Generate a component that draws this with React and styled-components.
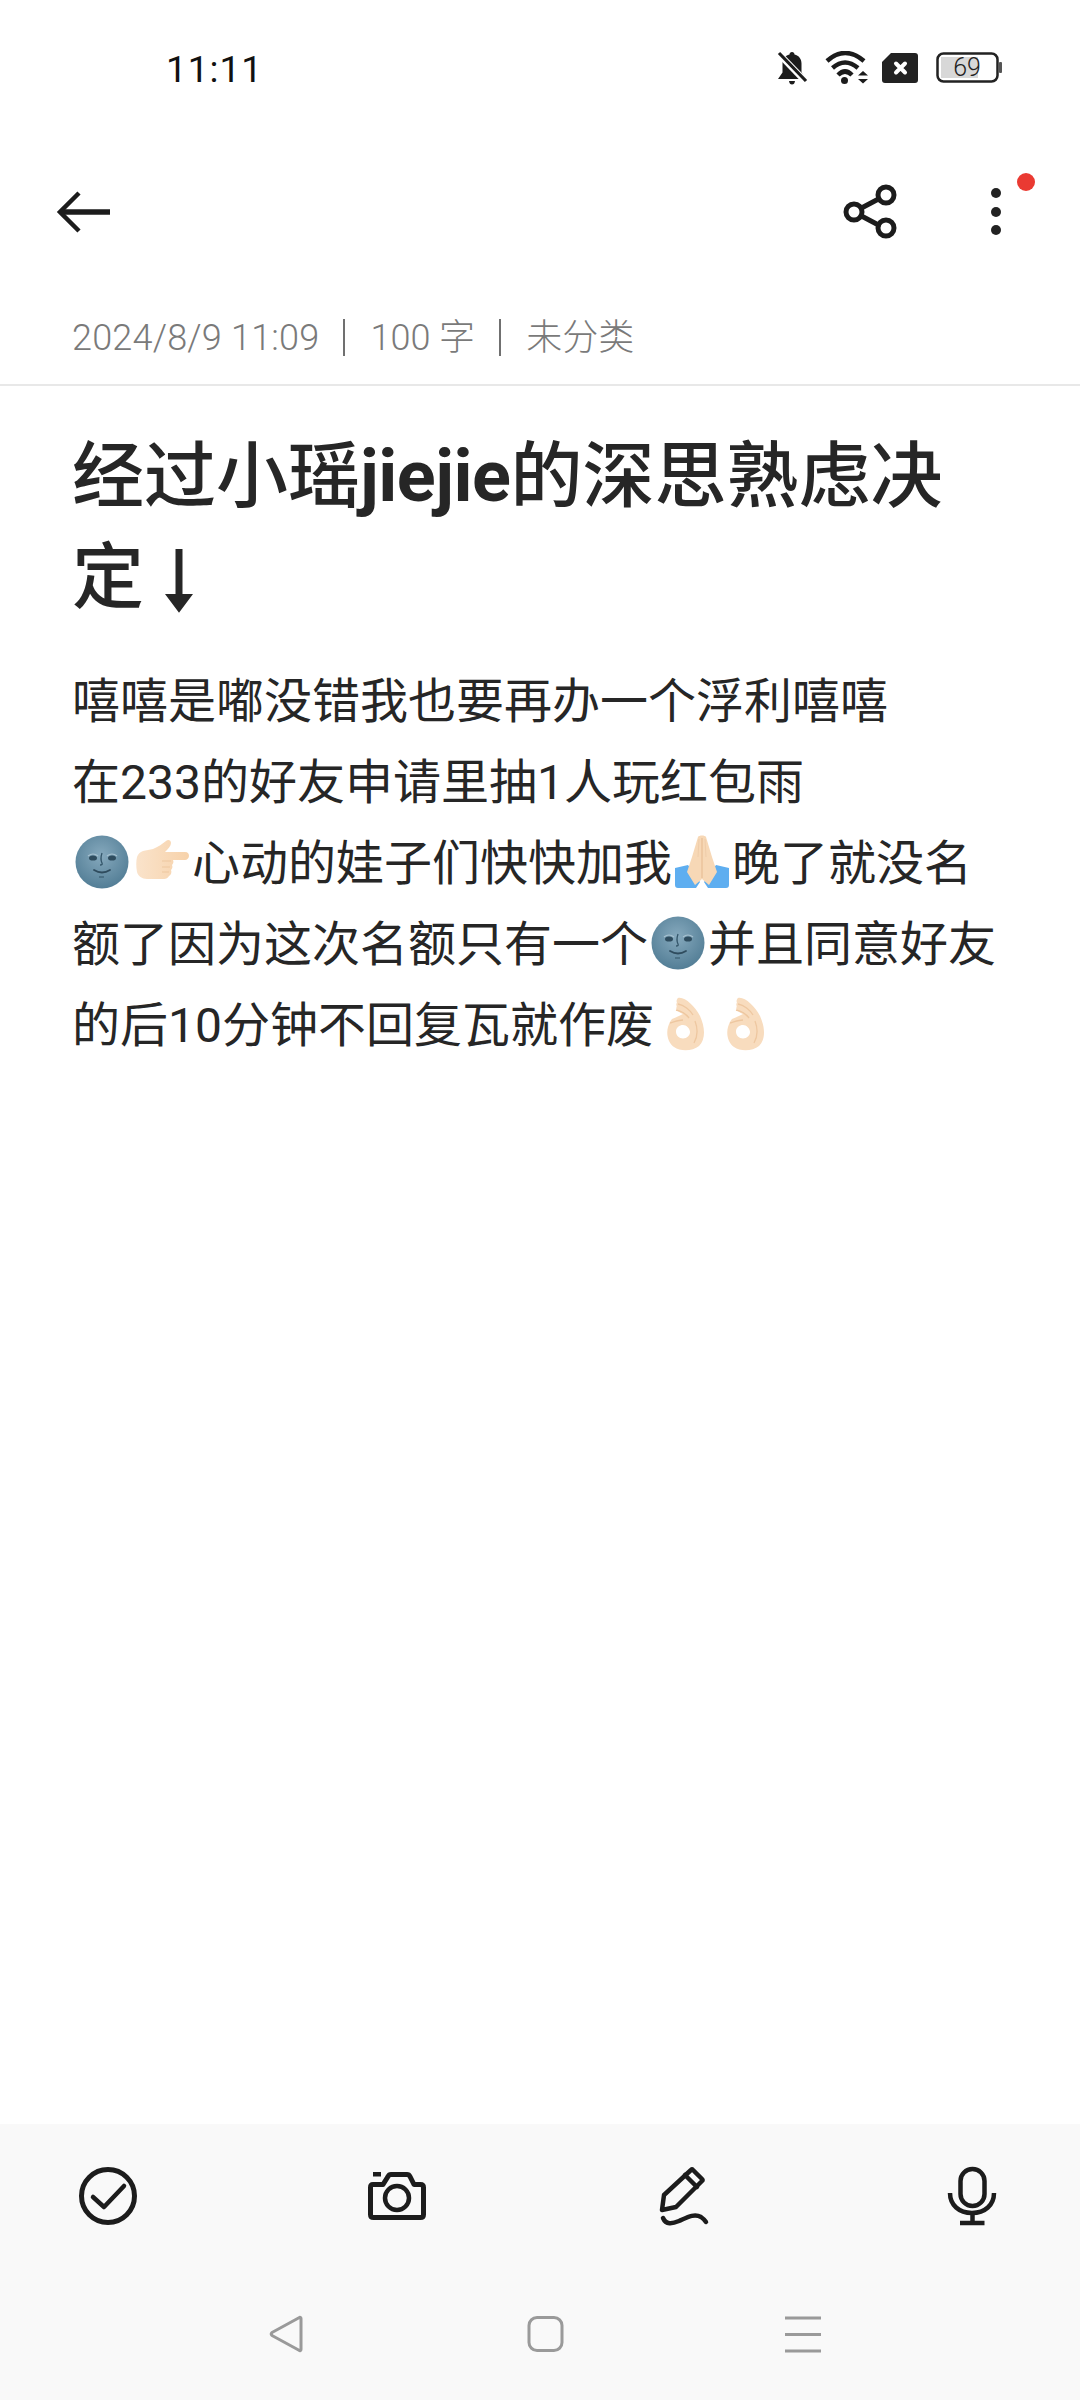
import React from "react";
import styled, { createGlobalStyle } from "styled-components";

const Global = createGlobalStyle`
  html, body { margin: 0; padding: 0; background: #fff; }
  body { font-family: Roboto, "Noto Sans CJK SC", sans-serif; }
`;

const Page = styled.div`
  width: 1080px;
  height: 2400px;
  display: flex;
  flex-direction: column;
  background: #fff;
  overflow: hidden;
`;

const StatusBar = styled.div`
  height: 136px;
  display: flex;
  align-items: center;
  justify-content: space-between;
  padding: 0 78px 0 166px;
`;

const Clock = styled.span`
  font-size: 37px;
  font-weight: 400;
  letter-spacing: 1px;
  color: #111;
  padding-top: 3px;
`;

const StatusIcons = styled.div`
  display: flex;
  align-items: center;
  gap: 12px;
`;

const Toolbar = styled.div`
  height: 152px;
  display: flex;
  align-items: center;
  justify-content: space-between;
  padding: 0 52px;
`;

const ToolbarGroup = styled.div`
  display: flex;
  align-items: center;
  gap: 63px;
`;

const IconBox = styled.div`
  position: relative;
  width: 64px;
  height: 64px;
  display: flex;
`;

const Badge = styled.span`
  position: absolute;
  left: 53px;
  top: -7px;
  width: 18px;
  height: 18px;
  border-radius: 50%;
  background: #ea3a32;
`;

const MetaRow = styled.div`
  height: 98px;
  box-sizing: border-box;
  display: flex;
  align-items: center;
  padding: 3px 72px 0;
  border-bottom: 2px solid #e8e8e8;
  color: #7a7a7a;
  font-size: 36px;
  font-weight: 300;
  line-height: 48px;
`;

const MetaDate = styled.span`
  letter-spacing: 0.2px;
`;

const MetaSep = styled.span`
  width: 2px;
  height: 37px;
  margin: 0 25px 0 24px;
  background: #707070;
`;

const Content = styled.div`
  flex: 1;
  padding: 40px 72px 0;
  color: #262626;
`;

const Title = styled.h1`
  margin: 0 0 33px;
  font-size: 72px;
  line-height: 101px;
  font-weight: 500;
`;

const TitleLine = styled.div`
  height: 101px;
  white-space: nowrap;
`;

const TitleLatin = styled.span`
  font-weight: 700;
  letter-spacing: -0.5px;
`;

const TitleArrow = styled.svg`
  width: 72px;
  height: 72px;
  vertical-align: -12px;
`;

const BodyLine = styled.div`
  font-size: 48px;
  line-height: 81px;
  height: 81px;
  white-space: nowrap;
`;

const EmojiSvg = styled.svg`
  width: 54px;
  height: 54px;
  margin: 0 3px;
  vertical-align: -9px;
`;

const BottomBar = styled.div`
  height: 276px;
  background: #f9f9f9;
  display: flex;
  flex-direction: column;
`;

const ToolRow = styled.div`
  height: 144px;
  display: flex;
  align-items: center;
  justify-content: space-between;
  padding: 0 76px;
`;

const NavRow = styled.div`
  height: 132px;
  display: flex;
  align-items: center;
  justify-content: center;
  gap: 218px;
  padding-left: 10px;
`;

const Glyph = ({ children, w = 64, h = 64 }) => (
  <svg width={w} height={h} viewBox={`0 0 ${w} ${h}`} fill="none" stroke="#1c1c1c" strokeLinecap="round" strokeLinejoin="round">
    {children}
  </svg>
);

const Moon = () => (
  <EmojiSvg viewBox="0 0 54 54">
    <defs>
      <radialGradient id="moonG" cx="48%" cy="38%" r="62%">
        <stop offset="0%" stopColor="#86a9bd" />
        <stop offset="100%" stopColor="#537e96" />
      </radialGradient>
    </defs>
    <circle cx="27" cy="27" r="26.5" fill="url(#moonG)" />
    <ellipse cx="18" cy="23" rx="4" ry="2.6" fill="#2f4c5e" />
    <ellipse cx="37" cy="23" rx="4" ry="2.6" fill="#2f4c5e" />
    <path d="M13 21q5-4 10 0M32 21q5-4 10 0" stroke="#a7c1cf" strokeWidth="1.2" fill="none" />
    <path d="M27 18q-2 6 0 10q1 2-2 2" stroke="#34566a" strokeWidth="1.3" fill="none" />
    <path d="M19 35q8 5 16 0" stroke="#2f4c5e" strokeWidth="1.8" fill="none" strokeLinecap="round" />
    <path d="M24 42h5" stroke="#3f6478" strokeWidth="1.4" />
  </EmojiSvg>
);

const PointHand = () => (
  <EmojiSvg viewBox="0 0 54 54">
    <defs>
      <linearGradient id="handG" x1="0" y1="0" x2="1" y2="0">
        <stop offset="0%" stopColor="#fae3cb" />
        <stop offset="100%" stopColor="#f7d2aa" />
      </linearGradient>
    </defs>
    <path
      d="M31 6c2-2 5-1 5 2 0 3-3 6-6 9h20c3 0 4 2 4 4s-2 4-4 4H38c1 2 0 4-1 5 1 2 0 4-1 5 1 2 0 5-2 6-1 2-3 3-5 3H12c-5 0-9-3-10-7-1-5-1-11 0-15 1-3 3-5 6-6 3-1 7-1 10-2 5-2 9-5 13-8z"
      fill="url(#handG)"
    />
    <path d="M27 26h9M27 32h8M27 37h7" stroke="#eec7a0" strokeWidth="1.2" fill="none" />
  </EmojiSvg>
);

const Pray = () => (
  <EmojiSvg viewBox="0 0 54 54">
    <path d="M0 33l13-3 12 17-4 6H3c-2 0-3-1-3-3zM54 33l-13-3-12 17 4 6h18c2 0 3-1 3-3z" fill="#5eaef0" />
    <path d="M23 2c1-2 7-2 8 0l6 20 5 15-8 13-7-6-7 6-8-13 5-15z" fill="#f7d8b6" />
    <path d="M27 3v40" stroke="#e8bf96" strokeWidth="1.2" />
    <path d="M24 4l-1 18M30 4l1 18" stroke="#efcdaa" strokeWidth="1" />
  </EmojiSvg>
);

const OkHand = () => (
  <EmojiSvg viewBox="0 0 54 54">
    <path
      fillRule="evenodd"
      d="M21 1c6-2 17 8 22 18 5 11 6 23-1 30-6 5-18 6-25 1-6-4-8-13-6-20 1-3 2-6 4-8 4-2 8-3 11-5-3-1-6-3-7-6 2-1-1-4 1-5-1-2 0-4 1-5zM26 28c-3.500 0-7 2.500-7 6.500s3 7 7 7 7-3 7-6.500-3.500-7-7-7z"
      fill="#f8dcbe"
    />
    <path d="M21 7c6 1 12 6 15 11M19 13c5 1 10 4 13 8M13 26c4-1 9-3 13-3M38 24c3 8 3 15-1 22" stroke="#eec7a0" strokeWidth="1.3" fill="none" />
  </EmojiSvg>
);

const BellOff = () => (
  <Glyph w={35} h={34}>
    <path d="M15 1c1.500 0 2.500 1 2.500 2.500 4.500 1 7 4.500 7 9v9l4.500 6.500H1l4.500-6.500v-9c0-4.500 2.500-8 7-9C12.500 2 13.500 1 15 1z" fill="#1c1c1c" stroke="none" />
    <path d="M12 30h6q-.5 3.500-3 3.500t-3-3.500z" fill="#1c1c1c" stroke="none" />
    <path d="M2 3l27 28" stroke="#fff" strokeWidth="6.500" strokeLinecap="butt" />
    <path d="M2 2l27 28" strokeWidth="3.200" strokeLinecap="butt" />
  </Glyph>
);

const Wifi = () => (
  <Glyph w={46} h={34}>
    <path d="M3 10Q21-6 40 10" strokeWidth="4.500" strokeLinecap="butt" />
    <path d="M8.500 17Q21 6 34 17" strokeWidth="4.500" strokeLinecap="butt" />
    <path d="M14 24q7-7 14 0" strokeWidth="4.500" strokeLinecap="butt" />
    <circle cx="20.500" cy="29.500" r="3.500" fill="#1c1c1c" stroke="none" />
    <path d="M39 20l5 4.500H34zM34 28h10l-5 4.500z" fill="#1c1c1c" stroke="none" />
  </Glyph>
);

const SimX = () => (
  <Glyph w={42} h={30}>
    <path d="M9 0H33q3 0 3 3v24q0 3-3 3H3q-3 0-3-3V9z" fill="#222" stroke="none" />
    <path d="M14 10.500l9 9M23 10.500l-9 9" stroke="#fff" strokeWidth="4" />
  </Glyph>
);

const Battery = () => (
  <svg width="66" height="32" viewBox="0 0 66 32">
    <rect x="1.500" y="1.500" width="60" height="28" rx="6" fill="none" stroke="#222" strokeWidth="2.500" />
    <rect x="5" y="5" width="37" height="21" fill="#d8d8d8" />
    <rect x="63" y="10" width="3" height="11" fill="#555" rx="1" />
    <text x="31" y="24" textAnchor="middle" fontFamily="Roboto, sans-serif" fontSize="25" fontWeight="300" fill="#222">69</text>
  </svg>
);

const BackIcon = () => (
  <Glyph>
    <path d="M27 13L8 32l19 19" strokeWidth="4.500" strokeLinecap="butt" strokeLinejoin="miter" />
    <path d="M9 32h49" strokeWidth="5.500" strokeLinecap="butt" />
  </Glyph>
);

const ShareIcon = () => (
  <Glyph>
    <circle cx="17" cy="32" r="8" strokeWidth="5" />
    <circle cx="49" cy="15" r="8" strokeWidth="5" />
    <circle cx="49" cy="48" r="8" strokeWidth="5" />
    <path d="M24.500 28l17-9M24.500 36l17 9" strokeWidth="5" />
  </Glyph>
);

const DotsIcon = () => (
  <Glyph>
    <g fill="#222" stroke="none">
      <circle cx="32" cy="13" r="5" />
      <circle cx="32" cy="32" r="5" />
      <circle cx="32" cy="50" r="5" />
    </g>
  </Glyph>
);

const CheckIcon = () => (
  <Glyph>
    <circle cx="32" cy="32" r="26.500" strokeWidth="5" />
    <path d="M17 33l11 10 20-21" strokeWidth="4.500" />
  </Glyph>
);

const CameraIcon = () => (
  <Glyph>
    <path d="M9 20.500h10l5-8q1-2 3-2h16q2 0 3 2l4 8h6.500q3 0 3 3v27q0 3-3 3H9.500q-3 0-3-3v-27q0-3 2.500-3z" strokeWidth="5" />
    <circle cx="33" cy="34" r="12" strokeWidth="4.500" />
    <rect x="9" y="8" width="8" height="4.500" fill="#1c1c1c" stroke="none" />
  </Glyph>
);

const PenIcon = () => (
  <Glyph>
    <path d="M12 31L39 6q1-1 2 0l9 9q1 1 0 2L24 43l-14 3z" strokeWidth="4.500" strokeLinejoin="round" />
    <path d="M33 11l12 12" strokeWidth="4.500" />
    <path d="M11 54c3 7 9 6 16 3s15-8 22-4q3 2 5 5" strokeWidth="4.500" />
  </Glyph>
);

const MicIcon = () => (
  <Glyph>
    <rect x="20.500" y="5" width="24" height="37" rx="12" strokeWidth="4.500" />
    <path d="M10 29c0 12 9 20 22 20s22-8 22-20" strokeWidth="4.500" strokeLinecap="butt" />
    <path d="M32.500 49v9" strokeWidth="4.500" strokeLinecap="butt" />
    <path d="M20 59h24.500" strokeWidth="4.500" strokeLinecap="butt" />
  </Glyph>
);

const NavStroke = { stroke: "#9a9a9a" };

const NavBack = () => (
  <svg width="40" height="40" viewBox="0 0 40 40" fill="none">
    <path d="M34 4.500v31c0 1-1 1.500-2 .8L5 21.500q-1.500-1.500 0-3L32 3.700c1-.7 2-.2 2 .8z" {...NavStroke} strokeWidth="3" strokeLinejoin="round" />
  </svg>
);

const NavHome = () => (
  <svg width="40" height="40" viewBox="0 0 40 40" fill="none">
    <rect x="4" y="3.500" width="33" height="33" rx="8" {...NavStroke} strokeWidth="3" />
  </svg>
);

const NavMenu = () => (
  <svg width="40" height="40" viewBox="0 0 40 40" fill="none">
    <path d="M2 4h36M2 20.500h36M2 37h36" {...NavStroke} strokeWidth="3" />
  </svg>
);

export default function App() {
  return (
    <Page>
      <Global />
      <StatusBar>
        <Clock>11:11</Clock>
        <StatusIcons>
          <BellOff />
          <Wifi />
          <SimX />
          <Battery />
        </StatusIcons>
      </StatusBar>
      <Toolbar>
        <IconBox><BackIcon /></IconBox>
        <ToolbarGroup>
          <IconBox><ShareIcon /></IconBox>
          <IconBox>
            <DotsIcon />
            <Badge />
          </IconBox>
        </ToolbarGroup>
      </Toolbar>
      <MetaRow>
        <MetaDate>2024/8/9 11:09</MetaDate>
        <MetaSep />
        <span>100 字</span>
        <MetaSep />
        <span>未分类</span>
      </MetaRow>
      <Content>
        <Title>
          <TitleLine>经过小瑶<TitleLatin>jiejie</TitleLatin>的深思熟虑决</TitleLine>
          <TitleLine>
            定
            <TitleArrow viewBox="0 0 72 72" fill="none" stroke="#262626">
              <path d="M35 7v48" strokeWidth="7" />
              <path d="M23 53h24L35 69z" fill="#262626" strokeWidth="2" />
            </TitleArrow>
          </TitleLine>
        </Title>
        <BodyLine>嘻嘻是嘟没错我也要再办一个浮利嘻嘻</BodyLine>
        <BodyLine>在233的好友申请里抽1人玩红包雨</BodyLine>
        <BodyLine><Moon /><PointHand />心动的娃子们快快加我<Pray />晚了就没名</BodyLine>
        <BodyLine>额了因为这次名额只有一个<Moon />并且同意好友</BodyLine>
        <BodyLine>的后10分钟不回复瓦就作废<OkHand /><OkHand /></BodyLine>
      </Content>
      <BottomBar>
        <ToolRow>
          <CheckIcon />
          <CameraIcon />
          <PenIcon />
          <MicIcon />
        </ToolRow>
        <NavRow>
          <NavBack />
          <NavHome />
          <NavMenu />
        </NavRow>
      </BottomBar>
    </Page>
  );
}
